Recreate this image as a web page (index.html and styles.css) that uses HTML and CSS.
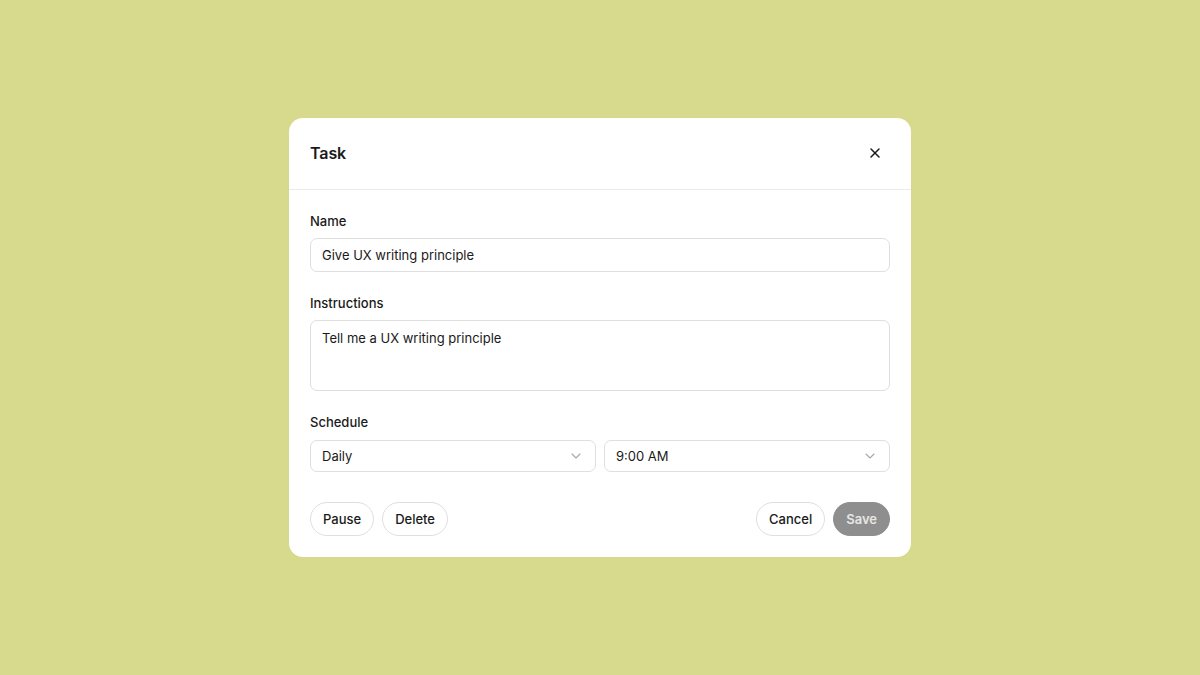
FILE: index.html
```html
<!DOCTYPE html>
<html lang="en">
<head>
    <meta charset="UTF-8">
    <title>Task</title>
    <link rel="stylesheet" href="styles.css">
</head>
<body>

<div class="dialog">
    <div class="dialog-header">
        <h2>Task</h2>
        <button class="close-btn" aria-label="Close">
            <svg width="12" height="12" viewBox="0 0 12 12" fill="none" stroke="#1a1a1a" stroke-width="1.5" stroke-linecap="round">
                <path d="M2 2L10 10M10 2L2 10"/>
            </svg>
        </button>
    </div>

    <div class="dialog-body">
        <div class="field">
            <label>Name</label>
            <div class="input">Give UX writing principle</div>
        </div>

        <div class="field">
            <label>Instructions</label>
            <div class="input textarea">Tell me a UX writing principle</div>
        </div>

        <div class="field">
            <label class="wide">Schedule</label>
            <div class="select-row">
                <div class="select">
                    <span>Daily</span>
                    <svg width="10" height="6" viewBox="0 0 10 6" fill="none" stroke="#a8a8a8" stroke-width="1.1" stroke-linecap="round" stroke-linejoin="round"><path d="M1 1L5 5L9 1"/></svg>
                </div>
                <div class="select">
                    <span>9:00 AM</span>
                    <svg width="10" height="6" viewBox="0 0 10 6" fill="none" stroke="#a8a8a8" stroke-width="1.1" stroke-linecap="round" stroke-linejoin="round"><path d="M1 1L5 5L9 1"/></svg>
                </div>
            </div>
        </div>

        <div class="actions">
            <div class="group">
                <button class="pill">Pause</button>
                <button class="pill">Delete</button>
            </div>
            <div class="group">
                <button class="pill">Cancel</button>
                <button class="pill primary">Save</button>
            </div>
        </div>
    </div>
</div>

</body>
</html>
```

FILE: styles.css
```css
body {
    font-family: Inter, "Noto Sans", sans-serif;
    margin: 0;
    padding: 0;
    height: 100vh;
    background-color: #d7d98c;
    display: flex;
    align-items: center;
    justify-content: center;
    color: #1a1a1a;
}
.dialog {
    width: 622px;
    background: #fff;
    border-radius: 14px;
    overflow: hidden;
}
.dialog-header {
    height: 71px;
    display: flex;
    align-items: center;
    justify-content: space-between;
    padding: 0 21px;
    border-bottom: 1px solid #ececec;
}
.dialog-header h2 {
    margin: 0;
    font-size: 16px;
    font-weight: 600;
    letter-spacing: -0.1px;
    padding-bottom: 2px;
}
.close-btn {
    width: 30px;
    height: 30px;
    border: none;
    background: none;
    padding: 0;
    display: flex;
    align-items: center;
    justify-content: center;
    cursor: pointer;
    margin-bottom: 2px;
}
.dialog-body {
    padding: 23px 21px 21px;
}
.field {
    margin-bottom: 23px;
}
.field label {
    display: block;
    font-size: 13px;
    line-height: 16px;
    font-weight: 500;
    margin-bottom: 9px;
}
.field label.wide {
    margin-bottom: 10px;
}
.input {
    height: 34px;
    box-sizing: border-box;
    border: 1px solid #dedede;
    border-radius: 7px;
    padding: 0 11px;
    font-size: 13px;
    display: flex;
    align-items: center;
}
.textarea {
    height: 71px;
    align-items: flex-start;
    padding-top: 9px;
    line-height: 16px;
}
.select-row {
    display: grid;
    grid-template-columns: 1fr 1fr;
    gap: 8px;
}
.select {
    height: 32px;
    box-sizing: border-box;
    border: 1px solid #dedede;
    border-radius: 7px;
    padding: 0 14px 0 11px;
    font-size: 13px;
    display: flex;
    align-items: center;
    justify-content: space-between;
}
.actions {
    display: flex;
    justify-content: space-between;
    margin-top: 30px;
}
.group {
    display: flex;
    gap: 8px;
}
.pill {
    height: 34px;
    padding: 0 12px;
    border: 1px solid #dedede;
    border-radius: 17px;
    background: #fff;
    font-family: inherit;
    font-size: 13px;
    font-weight: 500;
    color: #1a1a1a;
    cursor: pointer;
}
.pill.primary {
    background: #8e8e8e;
    border-color: #8e8e8e;
    color: #e6e6e6;
    font-weight: 600;
}
```
